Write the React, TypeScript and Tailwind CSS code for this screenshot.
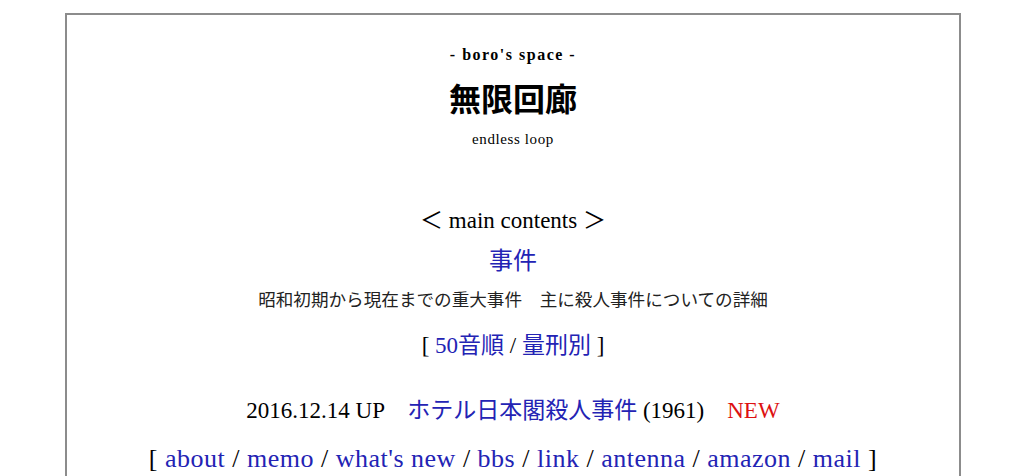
import React from "react";

const serif = { fontFamily: '"Liberation Serif", "Noto Sans CJK JP", serif' };

function A({ children }: { children: React.ReactNode }) {
  return <a className="text-[#2323b4]">{children}</a>;
}

export default function App() {
  return (
    <div className="w-[1024px] h-[476px] overflow-hidden bg-white pt-[13px]" style={serif}>
      <div className="ml-[65px] w-[896px] h-[600px] border-2 border-[#8c8c8c] text-black text-center">
        <div className="mt-[30px] text-[16px] leading-[20px] font-bold tracking-[1.5px]">- boro's space -</div>
        <div className="mt-[15px] text-[32px] leading-[40px] font-bold">無限回廊</div>
        <div className="mt-[9px] text-[15px] leading-[20px] tracking-[0.6px]">endless loop</div>
        <div className="mt-[58px] text-[23px] leading-[28px]">＜ main contents ＞</div>
        <div className="mt-[11px] text-[24px] leading-[30px]">
          <A>事件</A>
        </div>
        <div className="mt-[12px] text-[17.6px] leading-[24px] text-[#222]">
          昭和初期から現在までの重大事件　主に殺人事件についての詳細
        </div>
        <div className="mt-[20px] text-[23px] leading-[28px]">
          [ <A>50音順</A> / <A>量刑別</A> ]
        </div>
        <div className="mt-[37px] text-[23px] leading-[28px]">
          2016.12.14 UP　<A>ホテル日本閣殺人事件</A> (1961)　<span className="text-[#dd1111]">NEW</span>
        </div>
        <div className="mt-[18px] text-[26px] leading-[32px] tracking-[0.5px]">
          [ <A>about</A> / <A>memo</A> / <A>what's new</A> / <A>bbs</A> / <A>link</A> / <A>antenna</A> / <A>amazon</A> / <A>mail</A> ]
        </div>
      </div>
    </div>
  );
}
